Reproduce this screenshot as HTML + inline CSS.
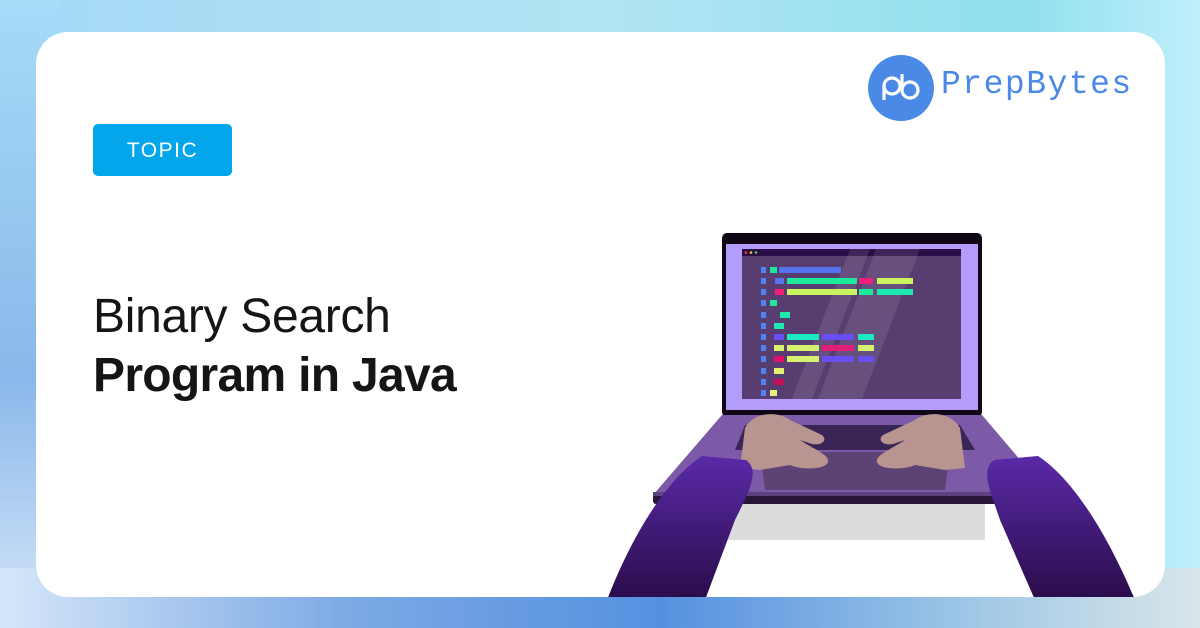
<!DOCTYPE html>
<html><head><meta charset="utf-8"><style>
html,body{margin:0;padding:0}
body{width:1200px;height:628px;overflow:hidden;position:relative;font-family:"Liberation Sans",sans-serif;
background:linear-gradient(90deg,#a3d8f6 0%,#b3e4f3 50%,#8fe0ee 85%,#bfeefa 100%);}
.bot{position:absolute;left:0;right:0;bottom:0;height:60px;background:linear-gradient(90deg,#d5e6f8 0%,#7aa8e4 30%,#5590e0 55%,#9cc6e6 80%,#d9e6ea 100%)}
.lef{position:absolute;left:0;top:0;width:60px;height:628px;background:linear-gradient(180deg,#a5dcf8,#8ab8ea 60%,#d5e6f8)}
.card{position:absolute;left:36px;top:32px;width:1129px;height:565px;background:#fff;border-radius:32px;overflow:hidden}
.topic{position:absolute;left:57px;top:92px;width:139px;height:52px;background:#03a6ea;border-radius:5px;color:#fff;font-size:21px;letter-spacing:1.5px;text-align:center;line-height:54px}
.h1{position:absolute;left:57px;top:255px;font-size:48px;color:#151515;line-height:59px;letter-spacing:-0.3px}
.h1 b{font-weight:700;letter-spacing:-0.7px}
.logo{position:absolute;left:832px;top:23px;width:66px;height:66px;border-radius:50%;background:#4a8ae6}
.lt{position:absolute;left:905px;top:34px;font-family:"Liberation Mono",monospace;font-size:33px;color:#4a8ae6;letter-spacing:1.5px}
</style></head><body>
<div class="lef"></div><div class="bot"></div>
<div class="card">
<div class="topic">TOPIC</div>
<div class="h1">Binary Search<br><b>Program in Java</b></div>
<div class="logo"><svg width="66" height="66" viewBox="0 0 66 66"><g fill="none" stroke="#fff" stroke-width="3.2"><circle cx="24" cy="31" r="8"/><line x1="16" y1="31" x2="16" y2="45"/><circle cx="42" cy="35" r="8"/><line x1="34" y1="19" x2="34" y2="35"/></g></svg></div>
<div class="lt">PrepBytes</div>
</div>
<svg style="position:absolute;left:0;top:0" width="1200" height="628" viewBox="0 0 1200 628">
<defs><linearGradient id="arm" x1="0" y1="0" x2="0" y2="1"><stop offset="0" stop-color="#5a2aa8"/><stop offset="1" stop-color="#2a0c4a"/></linearGradient>
<clipPath id="cc"><rect x="36" y="32" width="1129" height="565" rx="32"/></clipPath></defs>
<g clip-path="url(#cc)">
<rect x="723" y="500" width="262" height="40" fill="#dcdcdc"/>
<rect x="722" y="233" width="260" height="184" rx="5" fill="#0f0716"/>
<rect x="726" y="244" width="252" height="166" fill="#b39cfa"/>
<rect x="742" y="249" width="219" height="150" fill="#573d70"/>
<rect x="742" y="249" width="219" height="7" fill="#2a0d46"/>
<circle cx="746" cy="252.5" r="1.3" fill="#f33"/><circle cx="751" cy="252.5" r="1.3" fill="#fc3"/><circle cx="756" cy="252.5" r="1.3" fill="#3d3"/>
<polygon points="850,249 870,249 812,399 792,399" fill="#fff" opacity="0.1"/>
<polygon points="876,249 920,249 862,399 818,399" fill="#fff" opacity="0.1"/>
<g fill="#4e82f0">
<rect x="761" y="267" width="5" height="6"/><rect x="761" y="278" width="5" height="6"/><rect x="761" y="289" width="5" height="6"/><rect x="761" y="300" width="5" height="6"/><rect x="761" y="312" width="5" height="6"/><rect x="761" y="323" width="5" height="6"/><rect x="761" y="334" width="5" height="6"/><rect x="761" y="345" width="5" height="6"/><rect x="761" y="356" width="5" height="6"/><rect x="761" y="368" width="5" height="6"/><rect x="761" y="379" width="5" height="6"/><rect x="761" y="390" width="5" height="6"/></g>
<rect x="770" y="267" width="7" height="6" fill="#1de99a"/><rect x="779" y="267" width="62" height="6" fill="#5573ee"/>
<rect x="775" y="278" width="9" height="6" fill="#5573ee"/><rect x="787" y="278" width="70" height="6" fill="#1de99a"/><rect x="859" y="278" width="14" height="6" fill="#f0207a"/><rect x="877" y="278" width="36" height="6" fill="#c8f560"/>
<rect x="775" y="289" width="9" height="6" fill="#f0207a"/><rect x="787" y="289" width="70" height="6" fill="#c8f560"/><rect x="859" y="289" width="14" height="6" fill="#1de99a"/><rect x="877" y="289" width="36" height="6" fill="#1de9b0"/>
<rect x="770" y="300" width="7" height="6" fill="#1de99a"/>
<rect x="780" y="312" width="10" height="6" fill="#1de9b0"/>
<rect x="774" y="323" width="10" height="6" fill="#1de9b0"/>
<rect x="774" y="334" width="10" height="6" fill="#6a4ef5"/><rect x="787" y="334" width="32" height="6" fill="#1de9c0"/><rect x="822" y="334" width="32" height="6" fill="#6a4ef5"/><rect x="858" y="334" width="16" height="6" fill="#1de9c0"/>
<rect x="774" y="345" width="10" height="6" fill="#d6f070"/><rect x="787" y="345" width="32" height="6" fill="#d6f070"/><rect x="822" y="345" width="32" height="6" fill="#e02078"/><rect x="858" y="345" width="16" height="6" fill="#d6f070"/>
<rect x="774" y="356" width="10" height="6" fill="#e0106a"/><rect x="787" y="356" width="32" height="6" fill="#d6f070"/><rect x="822" y="356" width="32" height="6" fill="#6a4ef5"/><rect x="858" y="356" width="16" height="6" fill="#6a4ef5"/>
<rect x="774" y="368" width="10" height="6" fill="#e6f070"/>
<rect x="774" y="379" width="10" height="6" fill="#c8105a"/>
<rect x="770" y="390" width="7" height="6" fill="#e6f07a"/>
<polygon points="722,415 982,415 1050,495 653,495" fill="#7d5aa8"/>
<polygon points="745,425 960,425 975,450 735,450" fill="#3a2656"/>
<polygon points="760,452 950,452 945,490 765,490" fill="#50385f" opacity="0.7"/>
<rect x="653" y="494" width="397" height="10" rx="3" fill="#2a1636"/>
<rect x="653" y="492" width="397" height="4" fill="#5c4080"/>
<path d="M745,428 C755,410 780,412 790,420 L822,435 C828,440 822,446 812,444 L800,440 C815,450 830,455 828,462 C826,470 800,470 790,465 L760,470 L740,468 Z" fill="#b89590"/>
<path d="M960,428 C950,410 925,412 915,420 L883,435 C877,440 883,446 893,444 L905,440 C890,450 875,455 877,462 C879,470 905,470 915,465 L945,470 L965,468 Z" fill="#b89590"/>
<path d="M607,600 C630,540 665,480 702,456 L746,460 C760,470 750,490 735,520 L705,600 Z" fill="url(#arm)"/>
<path d="M1135,600 C1110,540 1075,480 1038,456 L994,460 C980,470 990,490 1000,520 L1035,600 Z" fill="url(#arm)"/>
</g>
</svg>
</body></html>
